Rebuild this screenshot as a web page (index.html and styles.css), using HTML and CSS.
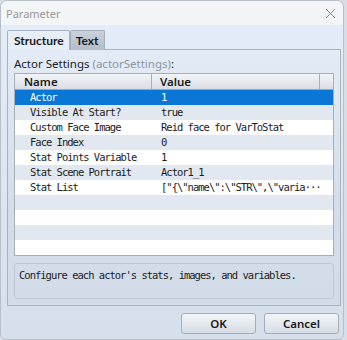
FILE: index.html
```html
<!DOCTYPE html>
<html lang="en">
  <head>
    <meta charset="UTF-8" />
    <title>Parameter</title>
    <link rel="stylesheet" href="styles.css">
  </head>
  <body>
    <div class="window">
      <div class="titlebar">
        <span class="title">Parameter</span>
        <span class="close">
          <svg width="11" height="11" viewBox="0 0 11 11">
            <path d="M1 1L10 10M10 1L1 10" stroke="#8c8c8c" stroke-width="1" />
          </svg>
        </span>
      </div>

      <div class="content">
        <div class="tabs">
          <div class="tab active">Structure</div>
          <div class="tab">Text</div>
        </div>

        <div class="panel">
          <div class="label">Actor Settings <span class="key">(actorSettings)</span>:</div>

          <div class="grid">
            <div class="head">
              <div class="hcell name">Name</div>
              <div class="hcell value">Value</div>
              <div class="hcell spare"></div>
            </div>
            <div class="row selected"><span class="c1">Actor</span><span class="c2">1</span></div>
            <div class="row alt"><span class="c1">Visible At Start?</span><span class="c2">true</span></div>
            <div class="row"><span class="c1">Custom Face Image</span><span class="c2">Reid face for VarToStat</span></div>
            <div class="row alt"><span class="c1">Face Index</span><span class="c2">0</span></div>
            <div class="row"><span class="c1">Stat Points Variable</span><span class="c2">1</span></div>
            <div class="row alt"><span class="c1">Stat Scene Portrait</span><span class="c2">Actor1_1</span></div>
            <div class="row"><span class="c1">Stat List</span><span class="c2">["{\"name\":\"STR\",\"varia···</span></div>
            <div class="row alt"></div>
            <div class="row"></div>
            <div class="row alt"></div>
            <div class="row"></div>
          </div>

          <div class="desc">Configure each actor's stats, images, and variables.</div>
        </div>

        <div class="buttons">
          <button class="btn">OK</button>
          <button class="btn">Cancel</button>
        </div>
      </div>
    </div>
  </body>
</html>
```

FILE: styles.css
```css
* {
  margin: 0;
  padding: 0;
  box-sizing: border-box;
}

body {
  background-color: #d9dde3;
  font-family: "Noto Sans", "Open Sans", sans-serif;
  width: 347px;
  height: 340px;
  overflow: hidden;
}

.window {
  width: 344px;
  height: 340px;
  border: 1px solid #b7bfc9;
  border-radius: 7px 7px 6px 6px;
  background: linear-gradient(#e4eefa, #d6e0ec);
  display: flex;
  flex-direction: column;
  overflow: hidden;
}

.titlebar {
  height: 24px;
  background-color: #f3f4f6;
  display: flex;
  align-items: center;
  justify-content: space-between;
  padding: 0 7px 0 5px;
}

.title {
  font-size: 11px;
  color: #9a9a9a;
}

.close {
  display: flex;
  margin-top: 1px;
}

.content {
  flex: 1;
  padding: 5px 3px 0 6px;
  display: flex;
  flex-direction: column;
}

.tabs {
  display: flex;
  height: 20px;
  margin-bottom: -1px;
  position: relative;
}

.tab {
  font-family: Lato, "Noto Sans", sans-serif;
  font-size: 12px;
  font-weight: 700;
  color: #1b1b1b;
  padding: 1px 5px 0 5px;
  line-height: 18px;
  border: 1px solid #a6b0bc;
  border-bottom: none;
  background: linear-gradient(#c9d1db, #b3bdc9);
  border-radius: 2px 2px 0 0;
}

.tab.active {
  background: #e6eef8;
  padding: 1px 5px 0 6px;
  height: 20px;
}

.panel {
  width: 334px;
  height: 257px;
  border: 1px solid #a9b3bf;
  background: linear-gradient(#e2ebf6, #d4deea 60%, #d2dce8);
  padding: 5px 6px 6px 6px;
  display: flex;
  flex-direction: column;
}

.label {
  font-size: 11.5px;
  color: #1b1b1b;
  line-height: 17px;
  height: 18px;
}

.key {
  color: #8d96a0;
}

.grid {
  width: 320px;
  height: 183px;
  border: 1px solid #a6aeb8;
  background-color: #ffffff;
  font-family: "DejaVu Sans Mono", monospace;
  font-size: 10.5px;
  letter-spacing: -1px;
  color: #1b1b1b;
}

.head {
  display: flex;
  height: 16px;
  background: linear-gradient(#f2f4f7, #d9dee4);
  border-bottom: 1px solid #9ea7b2;
  font-family: "Noto Sans", "Open Sans", sans-serif;
  font-size: 11.5px;
  font-weight: 600;
  letter-spacing: 0;
}

.hcell {
  line-height: 15px;
  border-right: 1px solid #a6aeb8;
}

.hcell.name {
  width: 137px;
  padding-left: 9px;
}

.hcell.value {
  width: 168px;
  padding-left: 8px;
}

.hcell.spare {
  flex: 1;
  border-right: none;
}

.row {
  display: flex;
  height: 15px;
  line-height: 12px;
  padding-top: 1px;
  white-space: nowrap;
}

.row.alt {
  background-color: #e2e8f0;
}

.row.selected {
  background-color: #0a77d6;
  color: #ffffff;
}

.c1 {
  width: 145px;
  padding-left: 15px;
}

.c2 {
  padding-left: 1px;
}

.desc {
  margin-top: 7px;
  height: 36px;
  width: 320px;
  border: 1px solid #bdc7d3;
  border-radius: 3px;
  font-family: "DejaVu Sans Mono", monospace;
  font-size: 10.5px;
  letter-spacing: -1px;
  color: #1b1b1b;
  padding: 5px 4px;
}

.buttons {
  display: flex;
  justify-content: flex-end;
  gap: 8px;
  padding: 7px 1px 0 0;
}

.btn {
  width: 75px;
  height: 21px;
  font-family: "Noto Sans", "Open Sans", sans-serif;
  font-size: 11.5px;
  font-weight: 600;
  color: #1b1b1b;
  border: 1px solid #a3acb7;
  border-radius: 3px;
  background: linear-gradient(#f3f5f8, #d7dde4);
}
```
